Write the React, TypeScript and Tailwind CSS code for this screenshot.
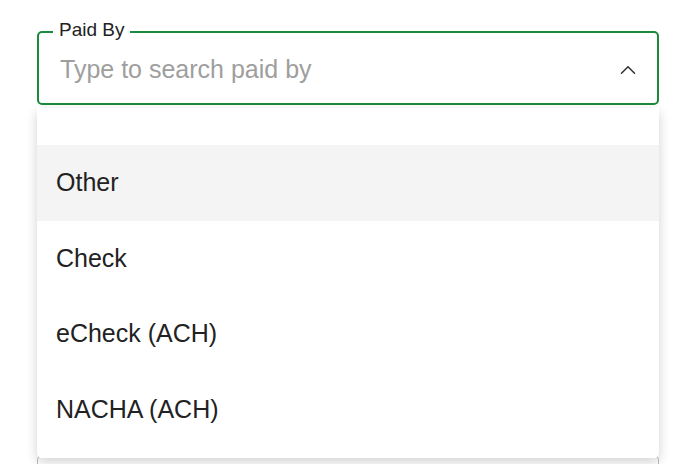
import { ChevronUp } from "lucide-react";

const options = ["Other", "Check", "eCheck (ACH)", "NACHA (ACH)"];

export default function App() {
  return (
    <div
      className="relative h-[464px] w-[688px] overflow-hidden bg-white pl-[37px] pr-[29px]"
      style={{ fontFamily: '"Liberation Sans", Arial, sans-serif' }}
    >
      <h2 className="-mt-[23px] h-[24px] text-[20px] font-bold leading-[24px] text-[#222]">
        Reimbursed by
      </h2>

      <div className="relative mt-[30px] h-[74px] rounded-[5px] border-2 border-[#1b8a3c]">
        <span className="absolute -top-[14px] left-[14px] bg-white px-[6px] text-[19px] leading-[22px] text-[#222]">
          Paid By
        </span>
        <div className="flex h-full items-center justify-between pl-[21px] pr-[16px] pt-[4px]">
          <span className="text-[25px] text-[#9e9e9e]">Type to search paid by</span>
          <ChevronUp className="h-[26px] w-[26px] text-[#333]" strokeWidth={1.4} />
        </div>
      </div>

      <div className="mt-[350px] h-[60px] rounded-[5px] border border-[#bdbdbd]" />

      <div className="absolute left-[37px] top-[108px] w-[622px] rounded-b-[5px] bg-white pb-[11px] pt-[37px] shadow-[0_4px_12px_rgba(0,0,0,0.18)]">
        {options.map((option, i) => (
          <div
            key={option}
            className={`flex h-[75.5px] items-center px-[19px] text-[25px] text-[#222] ${
              i === 0 ? "bg-[#f4f4f4]" : ""
            }`}
          >
            {option}
          </div>
        ))}
      </div>
    </div>
  );
}
